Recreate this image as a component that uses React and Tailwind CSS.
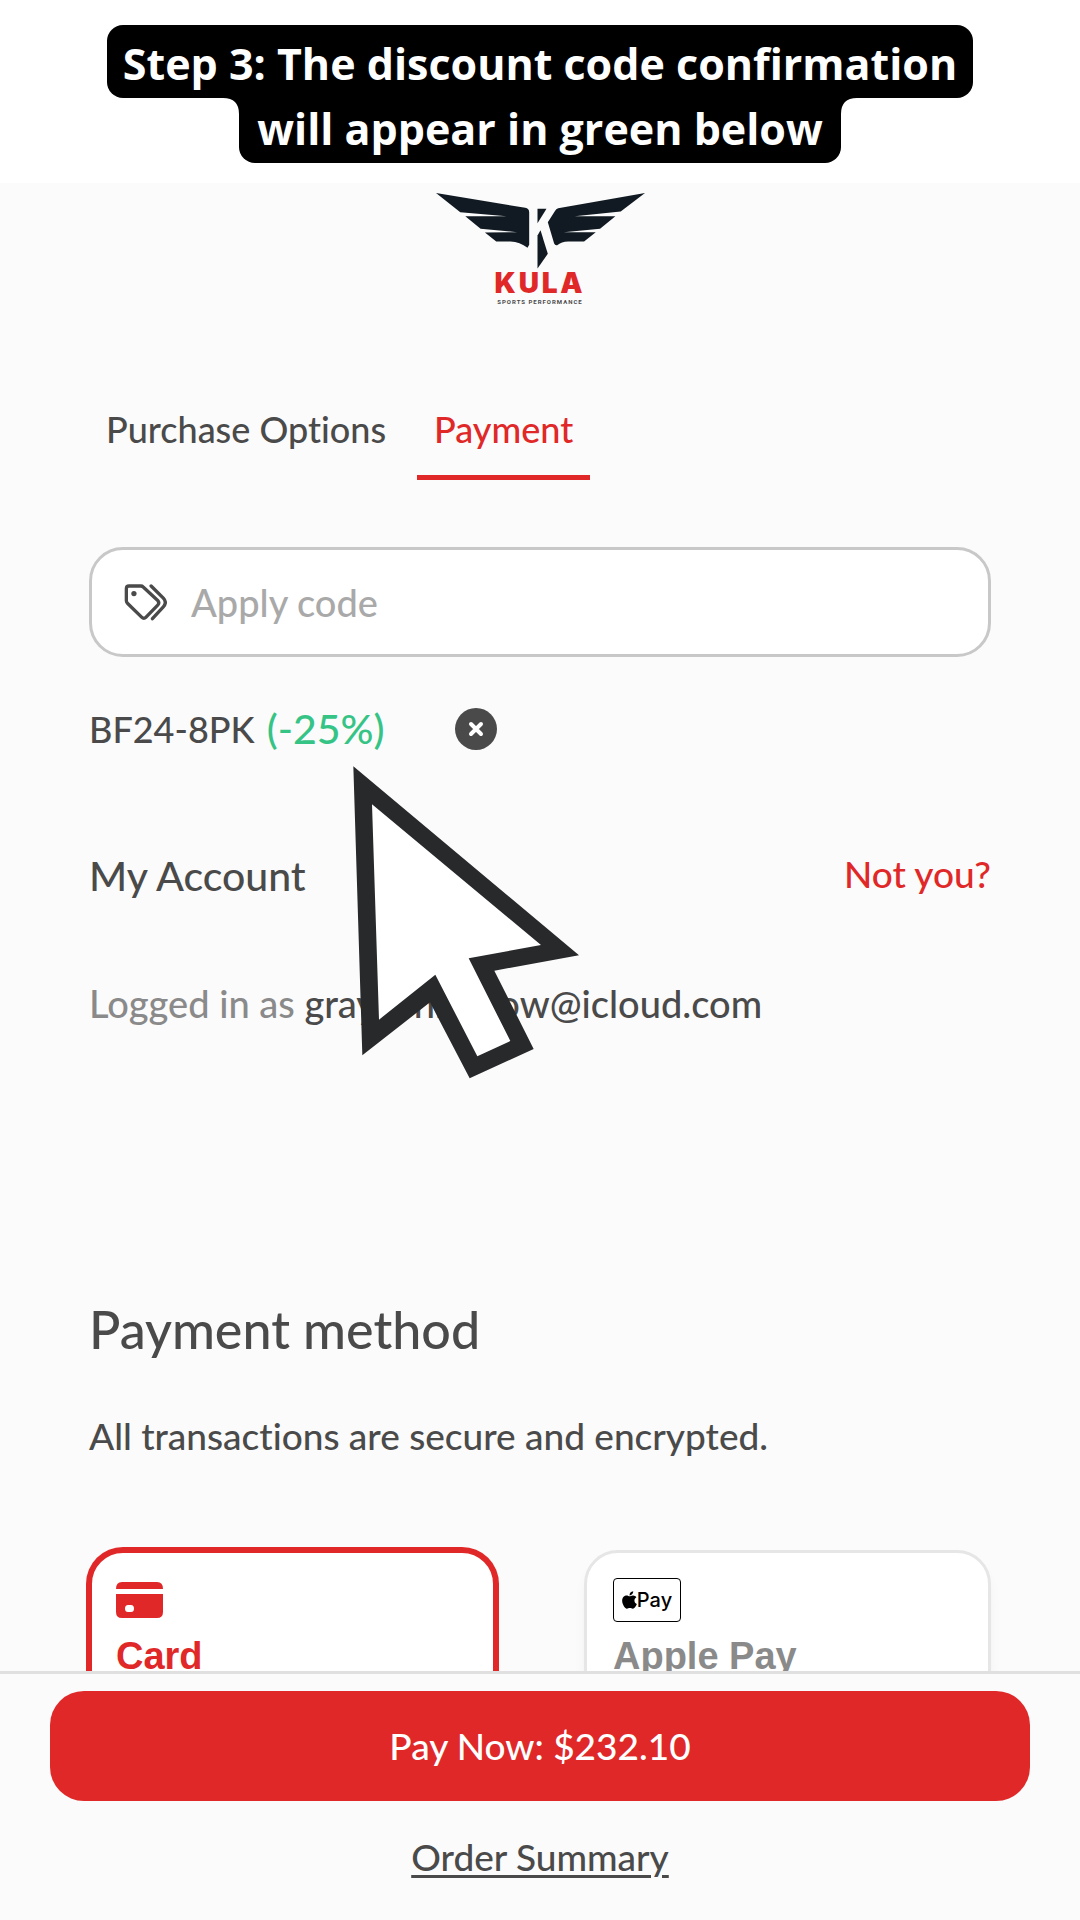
import React from 'react';

const TagsIcon = () => (
  <svg viewBox="0 0 128 112" className="h-[37px] w-[43px] shrink-0" fill="none" stroke="#4a4a4a" strokeWidth="10" strokeLinecap="round" strokeLinejoin="round" aria-hidden="true">
    <path d="M14 6H50Q54 6 57 9L101 50Q108 57 101 64L65 101Q59 107 53 101L10 59Q6 55 6 51V14Q6 6 14 6Z" />
    <path d="M81 6L118 43Q130 56 118 69L85 105" />
    <circle cx="29" cy="29" r="8" fill="#4a4a4a" stroke="none" />
  </svg>
);

const CardIcon = () => (
  <svg viewBox="0 0 47 36" className="h-[36px] w-[47px]" aria-hidden="true">
    <path d="M0 7Q0 0 6 0H41Q47 0 47 7Z" fill="#e02828" />
    <path d="M0 12H47V30Q47 36 41 36H6Q0 36 0 30ZM12 23Q9 23 9 26.500Q9 30 12 30H15Q18 30 18 26.500Q18 23 15 23Z" fill="#e02828" fillRule="evenodd" />
  </svg>
);

const AppleMark = () => (
  <svg viewBox="0 0 384 512" className="h-[20px] w-[15px]" fill="#000" aria-hidden="true">
    <path d="M318.700 268.700c-.2-36.700 16.400-64.400 50-84.800-18.800-26.900-47.200-41.700-84.700-44.600-35.500-2.800-74.300 20.700-88.500 20.700-15 0-49.400-19.700-76.400-19.700C63.300 141.200 4 184.800 4 273.500q0 39.300 14.400 81.200c12.800 36.700 59 126.700 107.200 125.200 25.200-.6 43-17.900 75.800-17.900 31.800 0 48.300 17.900 76.400 17.900 48.600-.7 90.400-82.500 102.600-119.300-65.200-30.700-61.700-90-61.700-91.900zm-56.600-164.200c27.300-32.400 24.800-61.900 24-72.500-24.100 1.400-52 16.400-67.900 34.900-17.500 19.800-27.800 44.300-25.600 71.900 26.100 2 49.900-11.400 69.500-34.300z" />
  </svg>
);

const Logo = () => (
  <div className="flex flex-col items-center pt-[9px]">
    <svg viewBox="48 50 628 230" className="h-[77px] w-[209px]" fill="#111a22" aria-label="Kula wings" role="img">
      <path d="M48 52L316 97Q328 99 328 110V208L323 217Q300 199 272 198H229L195 171L292 170L182 160L136 122L260 122L121 110Z" />
      <path d="M676 52L415 98Q409 100 405 107L384 140L403 204Q406 211 412 209Q425 199 445 198H493L528 170L432 170L541 160L587 122L465 122L603 108Z" />
      <path d="M353 100H380L353 143Z" />
      <path d="M362 164L384 235L353 279V180Z" />
    </svg>
    <div className="font-['Inter',sans-serif] text-[28px] leading-[28px] font-black tracking-widest text-[#e02828]">KULA</div>
    <div className="font-['Roboto',sans-serif] text-[6px] leading-[10px] font-bold tracking-[1px] text-[#4a4a4a]">SPORTS PERFORMANCE</div>
  </div>
);

const BannerCorner = ({ className }) => (
  <svg viewBox="0 0 16 16" className={`absolute top-0 size-4 ${className}`} aria-hidden="true">
    <path d="M0 0H16V16Q16 0 0 0Z" />
  </svg>
);

const Cursor = () => (
  <svg viewBox="40 77 681 939" className="pointer-events-none absolute top-[-86px] left-[264px] h-[313px] w-[227px]" aria-hidden="true">
    <path d="M41 78L718 645L464 691L582 926L390 1014L271 786L68 945Z" fill="#28292b" />
    <path d="M97 192L604 614L387 654L512 902L413 948L287 703L118 838Z" fill="#fff" />
  </svg>
);

const App = () => {
  return (
    <div className="flex h-screen flex-col bg-[#fbfbfb] font-['Lato',sans-serif] text-[37px] leading-[44px] font-medium text-[#4a4a4a] [font-variant-ligatures:none]">
      <header className="flex shrink-0 flex-col items-center bg-white pt-[25px] pb-5 font-['Open_Sans',sans-serif] text-[43px] font-bold text-white">
        <div className="rounded-2xl bg-black px-4 pt-1 leading-[69px]">Step 3: The discount code confirmation</div>
        <div className="relative rounded-b-2xl bg-black px-[18px] pb-1 leading-[61px]">
          <BannerCorner className="-left-4" />
          will appear in green below
          <BannerCorner className="-right-4 -scale-x-100" />
        </div>
      </header>

      <main className="min-h-0 flex-1 overflow-hidden">
        <Logo />

        <div className="px-[89px]">
          <nav className="mt-[88px] flex gap-[14px] text-[36px] leading-[44px]">
            <a href="#options" className="px-[17px] py-3">Purchase Options</a>
            <a href="#payment" className="border-b-[5px] border-[#e02828] px-[17px] pt-3 pb-[24px] text-[#e02828]">Payment</a>
          </nav>

          <label className="mt-[67px] flex h-[110px] items-center gap-6 rounded-[34px] border-3 border-[#c8c8c8] bg-white px-8">
            <TagsIcon />
            <input type="text" aria-label="Apply code" placeholder="Apply code" className="min-w-0 flex-1 text-[38px] outline-none placeholder:text-[#a9a9a9]" />
          </label>

          <div className="mt-[50px] flex items-center">
            <span className="text-[36px]">BF24-8PK</span>
            <span className="ml-3 text-[41px] text-[#36c486]">(-25%)</span>
            <button aria-label="Remove code" className="ml-[70px] flex size-[42px] items-center justify-center rounded-full bg-[#4a4a4a]">
              <svg viewBox="0 0 16 16" className="size-4" stroke="#fff" strokeWidth="4" strokeLinecap="round" aria-hidden="true">
                <path d="M3 3L13 13M13 3L3 13" />
              </svg>
            </button>
          </div>

          <section className="relative mt-[101px]">
            <div className="flex items-start justify-between">
              <h2 className="text-[41px] leading-[48px]">My Account</h2>
              <a href="#logout" className="text-[#e02828]">Not you?</a>
            </div>
            <p className="mt-[81px] text-[38px] leading-[44px]">
              <span className="text-[#8a8a8a]">Logged in as</span> graysonharlow@icloud.com
            </p>
            <Cursor />
          </section>

          <h1 className="mt-[274px] text-[52px] leading-[60px]">Payment method</h1>
          <p className="mt-[55px]">All transactions are secure and encrypted.</p>

          <div className="mt-[92px] grid grid-cols-2 gap-[88px] font-['Liberation_Sans',sans-serif] text-[38px] font-bold">
            <button className="flex h-60 flex-col items-start rounded-[34px] border-3 border-[#e02828] bg-white px-6 pt-[25px] text-[#e02828] ring-3 ring-[#e02828]">
              <div className="flex h-[44px] items-center">
                <CardIcon />
              </div>
              <div className="mt-3">Card</div>
            </button>
            <button className="flex h-60 flex-col items-start rounded-[34px] border-3 border-[#e6e6e6] bg-white px-[26px] pt-[25px] text-[#8a8a8a] shadow-lg shadow-black/5">
              <div className="flex h-[44px] w-[68px] items-center justify-center rounded-[4px] border border-black font-['Inter',sans-serif] text-[20px] font-medium text-black">
                <AppleMark />
                <span>Pay</span>
              </div>
              <div className="mt-3">Apple Pay</div>
            </button>
          </div>
        </div>
      </main>

      <footer className="flex shrink-0 flex-col items-center border-t-3 border-[#e0e0e0] px-[50px] pt-[17px] pb-[41px]">
        <button className="h-[110px] w-full rounded-[34px] bg-[#e02828] text-white">Pay Now: $232.10</button>
        <a href="#summary" className="mt-[34px] underline decoration-3 underline-offset-4">Order Summary</a>
      </footer>
    </div>
  );
};

export default App;
